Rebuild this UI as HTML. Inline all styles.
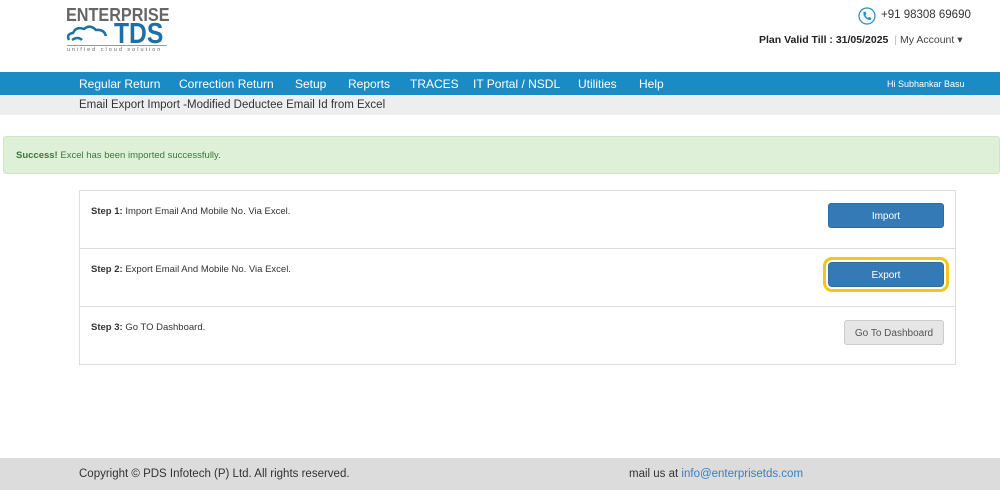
<!DOCTYPE html>
<html><head><style>
*{margin:0;padding:0;box-sizing:border-box}
body{width:1000px;height:490px;background:#fff;font-family:"Liberation Sans",sans-serif;position:relative;overflow:hidden;color:#333}
.abs{position:absolute}
.nav{top:72px;left:0;width:1000px;height:23px;background:#1b8bc6;color:#fff;font-size:12px}
.nav span{position:absolute;top:5px}
.crumb{top:95px;left:0;width:1000px;height:20px;background:#eceef0;font-size:11.5px;color:#333;padding:4px 0 0 79px}
.alert{top:136px;left:3px;width:997px;height:38px;background:#dff0d8;border:1px solid #d0e6c6;border-radius:3px;font-size:9.5px;color:#3c763d;padding:13px 0 0 12px}
.panel{left:79px;width:877px;border:1px solid #ddd;font-size:9.5px;color:#333}
.btn{position:absolute;left:748px;width:116px;height:25px;border-radius:3px;font-size:10px;text-align:center;line-height:25px}
.blue{background:#337ab7;color:#fff;border:1px solid #2e6da4}
.foot{top:458px;left:0;width:1000px;height:32px;background:#dcdcdc;font-size:11.5px;color:#333}
</style></head><body>
<div class="abs" style="left:66px;top:5px;font-size:18px;font-weight:bold;color:#666;transform:scaleX(0.9);transform-origin:left">ENTERPRISE</div>
<svg class="abs" style="left:66px;top:24px" width="50" height="20" viewBox="0 0 50 20"><path d="M3 16 Q0 10 7 9 Q10 2 18 5 Q24 0 30 6 Q38 5 40 12" fill="none" stroke="#1c6fa8" stroke-width="2.5"/><path d="M6 16 Q12 12 16 16" fill="none" stroke="#1c6fa8" stroke-width="2.5"/></svg>
<div class="abs" style="left:114px;top:18px;font-size:29px;font-weight:bold;color:#1c6fa8;transform:scaleX(0.85);transform-origin:left">TDS</div>
<div class="abs" style="left:67px;top:45px;width:100px;border-top:1px solid #999"></div>
<div class="abs" style="left:67px;top:47px;font-size:5.5px;color:#666;letter-spacing:2px">unified cloud solution</div>
<svg class="abs" style="left:858px;top:7px" width="18" height="18" viewBox="0 0 18 18"><circle cx="9" cy="9" r="8" fill="none" stroke="#2a8fc0" stroke-width="1.3"/><path d="M5.5 5 L7.5 4.5 L8.5 7 L7.3 8 Q8 10 10 11 L11 9.8 L13.3 11 L13 12.8 Q9.5 13.5 7 10.5 Q4.8 8 5.5 5Z" fill="#2a8fc0"/></svg>
<div class="abs" style="left:881px;top:9px;font-size:11.5px;color:#333">+91 98308 69690</div>
<div class="abs" style="left:759px;top:34px;font-size:10.5px;color:#222;font-weight:bold">Plan Valid Till : 31/05/2025 <span style="color:#bbb;font-weight:normal;margin:0 3px">|</span><span style="color:#444;font-weight:normal">My Account ▾</span></div>
<div class="abs nav"><span style="left:79px">Regular Return</span><span style="left:179px">Correction Return</span><span style="left:295px">Setup</span><span style="left:348px">Reports</span><span style="left:410px">TRACES</span><span style="left:473px">IT Portal / NSDL</span><span style="left:578px">Utilities</span><span style="left:639px">Help</span><span style="left:887px;top:7px;font-size:9px">Hi Subhankar Basu</span></div>
<div class="abs crumb">Email Export Import -Modified Deductee Email Id from Excel</div>
<div class="abs alert"><b>Success!</b> Excel has been imported successfully.</div>
<div class="abs panel" style="top:190px;height:59px"><div class="abs" style="left:11px;top:15px"><b>Step 1:</b> Import Email And Mobile No. Via Excel.</div><div class="btn blue" style="top:12px">Import</div></div>
<div class="abs panel" style="top:248px;height:59px"><div class="abs" style="left:11px;top:15px"><b>Step 2:</b> Export Email And Mobile No. Via Excel.</div><div class="btn blue" style="top:13px;box-shadow:0 0 0 2px #fff,0 0 0 5px #f5c518;border-radius:4px">Export</div></div>
<div class="abs panel" style="top:306px;height:59px"><div class="abs" style="left:11px;top:15px"><b>Step 3:</b> Go TO Dashboard.</div><div class="btn" style="top:13px;left:764px;width:100px;background:#e6e6e6;border:1px solid #ccc;color:#555">Go To Dashboard</div></div>
<div class="abs foot"><span class="abs" style="left:79px;top:10px">Copyright © PDS Infotech (P) Ltd. All rights reserved.</span><span class="abs" style="left:629px;top:10px">mail us at <span style="color:#3a7fc0">info@enterprisetds.com</span></span></div>
</body></html>
